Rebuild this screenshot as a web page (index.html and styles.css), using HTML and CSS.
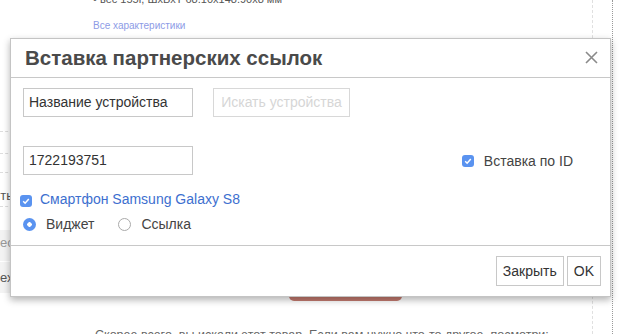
FILE: index.html
```html
<!DOCTYPE html>
<html lang="ru">
<head>
    <meta charset="UTF-8">
    <meta name="viewport" content="width=device-width, initial-scale=1.0">
    <title>Вставка партнерских ссылок</title>
    <link rel="stylesheet" href="styles.css">
</head>
<body>
    <div id="page">
        <div id="content">
            <div id="side">
                <div class="sideRow"></div>
                <div class="sideRow"></div>
                <div class="sideRow short"></div>
                <div class="sideRow tall"><span class="sideLabel">Сравнить</span></div>
                <div id="sideBlock">
                    <div class="blockRow">есть отзывы</div>
                    <div class="blockRow">ехника</div>
                </div>
            </div>
            <div id="main">
                <div class="specLine">• вес 155г, ШхВхТ 68.10x148.90x8 мм</div>
                <a class="specLink">Все характеристики</a>
                <div class="buyButton">Купить</div>
                <div class="hint">Скорее всего, вы искали этот товар. Если вам нужно что-то другое, посмотри:</div>
            </div>
        </div>
        <div id="gutter"></div>
    </div>

    <div id="dialog">
        <div id="dialogHeader">
            <h1>Вставка партнерских ссылок</h1>
            <svg class="closeIcon" width="13" height="13" viewBox="0 0 13 13">
                <path d="M1 1 L12 12 M12 1 L1 12" stroke="#8a8a8a" stroke-width="1.6" fill="none"/>
            </svg>
        </div>
        <div id="dialogBody">
            <div class="row">
                <div class="field">Название устройства</div>
                <div class="searchButton">Искать устройства</div>
            </div>
            <div class="row idRow">
                <div class="field">1722193751</div>
                <label class="check idCheck"><span class="box"><svg width="12" height="12" viewBox="0 0 12 12"><path d="M3.2 6.3 L5.1 8.2 L8.8 3.9" stroke="#fff" stroke-width="1.5" fill="none"/></svg></span>Вставка по ID</label>
            </div>
            <label class="check deviceCheck"><span class="box"><svg width="12" height="12" viewBox="0 0 12 12"><path d="M3.2 6.3 L5.1 8.2 L8.8 3.9" stroke="#fff" stroke-width="1.5" fill="none"/></svg></span>Смартфон Samsung Galaxy S8</label>
            <div class="radioRow">
                <label class="radio"><span class="dot on"></span>Виджет</label>
                <label class="radio"><span class="dot"></span>Ссылка</label>
            </div>
        </div>
        <div id="dialogFooter">
            <div class="footButton">Закрыть</div>
            <div class="footButton">OK</div>
        </div>
    </div>
</body>
</html>
```

FILE: styles.css
```css
body {
    margin: 0px;
    width: 628px;
    height: 334px;
    overflow: hidden;
    position: relative;
    background-color: #fff;
    font-family: "Liberation Sans", Arial, sans-serif;
    color: #333;
}
#page {
    display: flex;
    height: 334px;
}
#content {
    width: 593px;
    display: flex;
    border-right: 1px dashed #e0e0e0;
    box-sizing: border-box;
}
#gutter {
    width: 20px;
    border-right: 1px dotted #999;
    box-sizing: border-box;
}
#side {
    width: 85px;
    padding-top: 110px;
    overflow: hidden;
}
.sideRow {
    height: 21px;
    border-bottom: 1px dashed #ddd;
}
.sideRow.short {
    height: 18px;
}
.sideRow.tall {
    height: 33px;
    display: flex;
    align-items: center;
    font-size: 13px;
    color: #555;
}
.sideLabel {
    margin-left: -45px;
    margin-top: 12px;
    white-space: nowrap;
}
#sideBlock {
    margin-top: 23px;
    height: 63px;
    background-color: #f3f3f3;
    font-size: 13px;
    color: #999;
}
.blockRow {
    height: 31px;
    line-height: 26px;
    border-bottom: 1px solid #fff;
    white-space: nowrap;
}
.blockRow + .blockRow {
    color: #555;
    line-height: 32px;
}
#main {
    flex: 1;
    padding-left: 8px;
}
.specLine {
    font-size: 11px;
    color: #555;
    margin-top: -7px;
    height: 14px;
}
.specLink {
    display: block;
    margin-top: 13px;
    font-size: 10px;
    color: #8d9be6;
}
.buyButton {
    width: 113px;
    height: 30px;
    margin-top: 240px;
    margin-left: 196px;
    border-radius: 5px;
    background-color: #c57b70;
    color: #fff;
    font-size: 13px;
    text-align: center;
    line-height: 30px;
}
.hint {
    margin-top: 27px;
    margin-left: 2px;
    font-size: 12.5px;
    color: #666;
    white-space: nowrap;
}
#dialog {
    position: absolute;
    left: 10px;
    top: 38px;
    width: 601px;
    box-sizing: border-box;
    background-color: #fff;
    border: 1px solid #c4c4c4;
    box-shadow: 0 3px 7px rgba(0, 0, 0, 0.3);
}
#dialogHeader {
    height: 38px;
    border-bottom: 1px solid #c8c8c8;
    display: flex;
    align-items: center;
    padding: 0 12px 0 14px;
}
#dialogHeader h1 {
    margin: 0px;
    flex: 1;
    font-size: 20.5px;
    font-weight: bold;
    color: #4a4a4a;
}
.closeIcon {
    margin-top: -1px;
}
#dialogBody {
    padding: 10px 12px 13px 12px;
}
.row {
    display: flex;
    align-items: center;
}
.field {
    width: 170px;
    height: 29px;
    box-sizing: border-box;
    border: 1px solid #c8c8c8;
    padding-left: 5px;
    font-size: 14px;
    line-height: 27px;
    color: #333;
}
.searchButton {
    width: 137px;
    height: 29px;
    box-sizing: border-box;
    margin-left: 20px;
    border: 1px solid #d8d8d8;
    font-size: 14px;
    line-height: 27px;
    text-align: center;
    color: #d6d6d6;
}
.idRow {
    margin-top: 29px;
}
.check {
    display: flex;
    align-items: center;
    font-size: 14px;
}
.box {
    width: 12px;
    height: 12px;
    border-radius: 3px;
    background-color: #5a93f0;
    display: flex;
}
.idCheck {
    margin-left: auto;
    margin-right: 25px;
    color: #444;
}
.idCheck .box {
    margin-right: 10px;
}
.deviceCheck {
    margin-top: 16px;
    margin-left: -3px;
    color: #3d6fcf;
}
.deviceCheck .box {
    margin-right: 8px;
    margin-top: 3px;
}
.radioRow {
    display: flex;
    margin-top: 9px;
}
.radio {
    display: flex;
    align-items: center;
    font-size: 14px;
    color: #444;
    margin-right: 24px;
}
.dot {
    width: 13px;
    height: 13px;
    box-sizing: border-box;
    border-radius: 50%;
    border: 1px solid #aaa;
    margin-right: 10px;
    background-color: #fff;
}
.dot.on {
    border: none;
    background: radial-gradient(circle, #fff 0 2px, #5a93f0 2.5px);
}
#dialogFooter {
    border-top: 1px solid #c8c8c8;
    padding: 10px 9px 10px 0;
    display: flex;
    justify-content: flex-end;
    gap: 3px;
}
.footButton {
    height: 30px;
    box-sizing: border-box;
    border: 1px solid #c8c8c8;
    padding: 0 6px;
    font-size: 14px;
    line-height: 28px;
    color: #333;
}
```
